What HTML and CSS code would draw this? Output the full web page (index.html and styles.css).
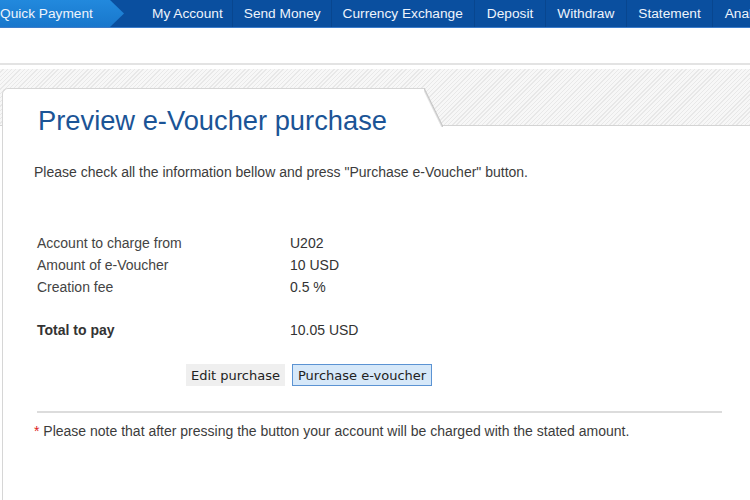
FILE: index.html
```html
<!DOCTYPE html>
<html>
<head>
<meta charset="utf-8">
<link rel="stylesheet" href="styles.css">
</head>
<body>
<nav class="nav">
  <a class="nav-active">Quick Payment</a>
  <a class="nav-item first">My Account</a>
  <a class="nav-item second">Send Money</a>
  <a class="nav-item">Currency Exchange</a>
  <a class="nav-item">Deposit</a>
  <a class="nav-item">Withdraw</a>
  <a class="nav-item">Statement</a>
  <a class="nav-item">Anal</a>
</nav>
<div class="topline"></div>
<div class="band">
  <div class="tab">
    <h1 class="title">Preview e-Voucher purchase</h1>
  </div>
</div>
<div class="panel">
  <p class="intro">Please check all the information bellow and press "Purchase e-Voucher" button.</p>
  <table class="details">
    <tr><td class="lbl">Account to charge from</td><td class="val">U202</td></tr>
    <tr><td class="lbl">Amount of e-Voucher</td><td class="val">10 USD</td></tr>
    <tr><td class="lbl">Creation fee</td><td class="val">0.5 %</td></tr>
    <tr class="spacer"><td></td><td></td></tr>
    <tr><td class="lbl total">Total to pay</td><td class="val">10.05 USD</td></tr>
  </table>
  <div class="buttons">
    <button class="btn btn-edit">Edit purchase</button>
    <button class="btn btn-buy">Purchase e-voucher</button>
  </div>
  <hr class="sep">
  <p class="note"><span class="star">*</span> Please note that after pressing the button your account will be charged with the stated amount.</p>
</div>
</body>
</html>
```
FILE: styles.css
```css
html, body {
  margin: 0;
  padding: 0;
  background: #fff;
  font-family: "Liberation Sans", Arial, sans-serif;
}
body {
  height: 500px;
  overflow: hidden;
}

.nav {
  display: flex;
  height: 28px;
  box-sizing: border-box;
  background: #0a4f9f;
  border-bottom: 1px solid #3b7ccb;
  white-space: nowrap;
  overflow: hidden;
}
.nav a {
  font-size: 13.7px;
  line-height: 27px;
  color: #eef4fc;
  flex: none;
}
.nav-active {
  width: 125px;
  padding-left: 1px;
  box-sizing: border-box;
  background: linear-gradient(#2289dd, #1877cc);
  clip-path: polygon(0 0, 111px 0, 125px 50%, 111px 100%, 0 100%);
  margin-left: -1px;
}
.nav-item {
  padding: 0 11.5px;
  border-left: 1px solid #08468f;
}
.nav-item.first {
  border-left: none;
  padding-left: 28px;
  padding-right: 9px;
}
.nav-item.second {
  padding-left: 11px;
  padding-right: 10px;
}
.nav-item.second + .nav-item {
  padding-left: 11px;
}

.topline {
  margin-top: 35px;
  height: 2px;
  background: #e3e3e3;
}

.band {
  margin-top: 4px;
  height: 57px;
  box-sizing: border-box;
  border-bottom: 1px solid #d4d4d4;
  background: repeating-linear-gradient(135deg, #f7f7f7 0 2px, #e8e8e8 2px 3px);
  display: flex;
  align-items: flex-end;
}
.tab {
  position: relative;
  margin-left: 2px;
  margin-bottom: -1px;
  width: 422px;
  height: 38px;
  box-sizing: border-box;
  background: #fff;
  border-top: 1px solid #d6d6d6;
  border-left: 1px solid #d6d6d6;
  border-top-left-radius: 6px;
  padding: 17px 0 0 35px;
}
.tab::after {
  content: "";
  position: absolute;
  left: 100%;
  top: -1px;
  width: 19px;
  height: 39px;
  background: linear-gradient(to bottom left, transparent 47%, #c4c4c4 50%, #fff 56%);
}
.title {
  margin: 0;
  font-size: 27.3px;
  line-height: 30px;
  font-weight: normal;
  color: #1b5496;
  white-space: nowrap;
}

.panel {
  margin-left: 2px;
  border-left: 1px solid #d6d6d6;
  height: 374px;
  padding-left: 31px;
  color: #3c3c3c;
  font-size: 14px;
}
.intro {
  margin: 0;
  padding-top: 38px;
  line-height: 16px;
}
.details {
  margin: 52px 0 0 3px;
  border-collapse: collapse;
}
.details td {
  padding: 0;
  height: 22px;
  line-height: 22px;
  vertical-align: top;
}
.lbl {
  width: 253px;
  color: #444;
}
.val {
  color: #333;
}
.total {
  font-weight: bold;
  color: #333;
}
.spacer td {
  height: 21px;
}

.buttons {
  display: flex;
  gap: 7px;
  margin: 23px 0 0 152px;
}
.btn {
  font-family: "DejaVu Sans", Verdana, sans-serif;
  font-size: 13px;
  height: 22px;
  padding: 0 4px;
  color: #222;
  cursor: pointer;
}
.btn-edit {
  background: #efefef;
  border: 1px solid #efefef;
}
.btn-buy {
  padding: 0 5px;
  background: #d6e8f9;
  border: 1px solid #5b93d3;
}

.sep {
  margin: 25px 0 0 3px;
  width: 685px;
  border: none;
  height: 2px;
  background: #dcdcdc;
}
.note {
  margin: 10px 0 0 0;
  line-height: 16px;
  color: #3c3c3c;
}
.star {
  color: #d22;
}
```
